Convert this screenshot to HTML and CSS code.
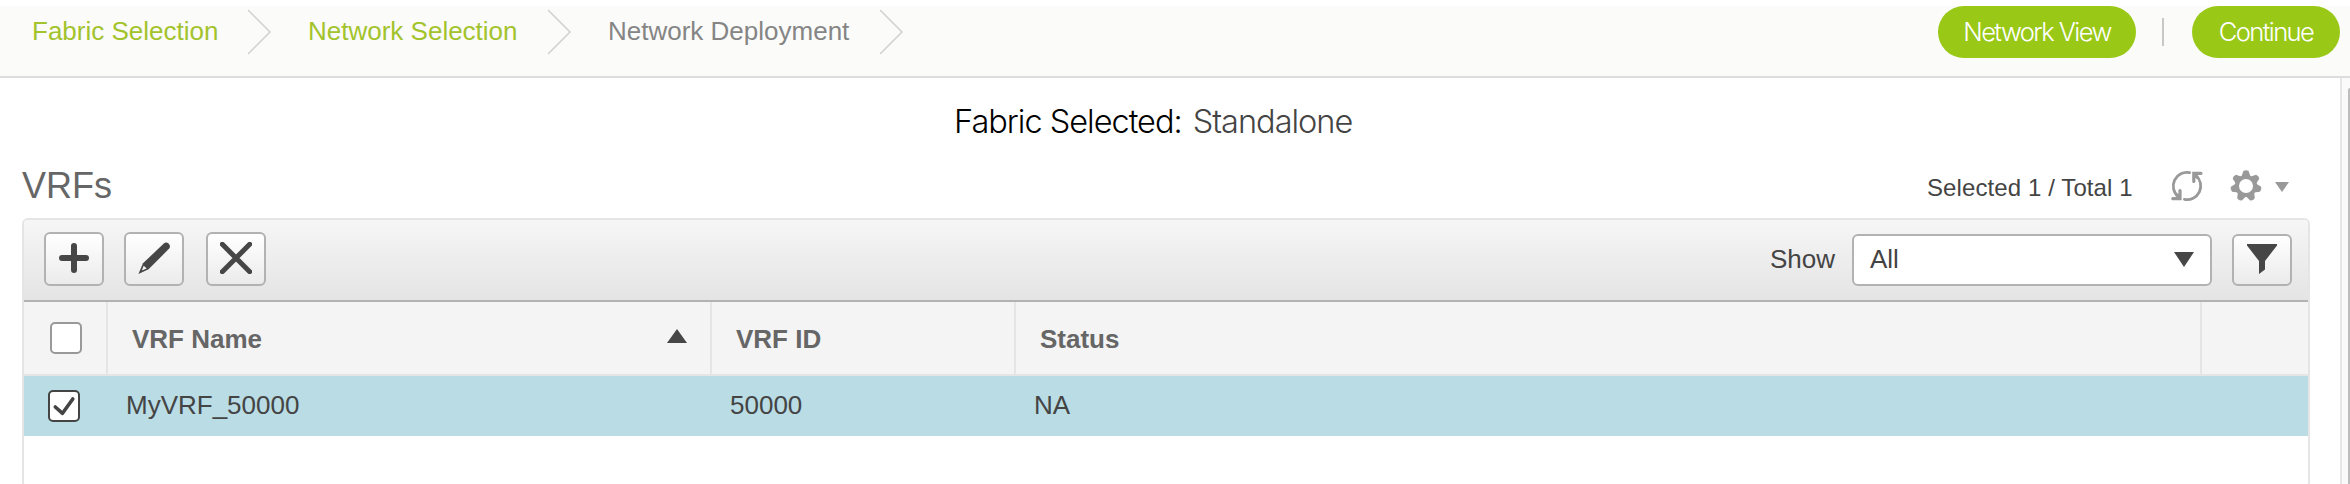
FILE: index.html
```html
<!DOCTYPE html>
<html lang="en">
<head>
<meta charset="utf-8">
<title>VRFs</title>
<link rel="stylesheet" href="styles.css">
</head>
<body>
<header class="topbar">
  <nav class="steps">
    <span class="step step-fabric">Fabric Selection</span>
    <svg class="chevron" viewBox="0 0 24 46"><path d="M0 1L22 23L0 45"/></svg>
    <span class="step step-network">Network Selection</span>
    <svg class="chevron" viewBox="0 0 24 46"><path d="M0 1L22 23L0 45"/></svg>
    <span class="step step-current">Network Deployment</span>
    <svg class="chevron" viewBox="0 0 24 46"><path d="M0 1L22 23L0 45"/></svg>
  </nav>
  <div class="actions">
    <button class="pill pill-view">Network View</button>
    <span class="divider"></span>
    <button class="pill pill-continue">Continue</button>
  </div>
</header>
<div class="body">
  <main class="content">
    <div class="fabric"><span class="fabric-label">Fabric Selected:</span><span class="fabric-value">Standalone</span></div>
    <div class="titlebar">
      <h1 class="title">VRFs</h1>
      <span class="count">Selected 1 / Total 1</span>
      <svg class="refresh" viewBox="0 0 32 32">
        <path d="M18.6 2.7A13.6 13.6 0 0 0 7.2 26.5M13.4 29.3A13.6 13.6 0 0 0 24.8 5.5"/>
        <path class="arrowheads" d="M30 3.3H22.8V11.5M1.8 28.7H9V20.5M23 4L26 7M8.8 28L5.8 25"/>
      </svg>
      <svg class="gear" viewBox="-16 -16 32 32">
        <path id="tooth" d="M-4.6 -9.2L-2.6 -14.9Q0 -16.6 2.6 -14.9L4.6 -9.2Z"/>
        <use href="#tooth" transform="rotate(51.43)"/>
        <use href="#tooth" transform="rotate(102.86)"/>
        <use href="#tooth" transform="rotate(154.29)"/>
        <use href="#tooth" transform="rotate(205.71)"/>
        <use href="#tooth" transform="rotate(257.14)"/>
        <use href="#tooth" transform="rotate(308.57)"/>
        <circle class="gear-ring" r="9"/>
      </svg>
      <svg class="gear-caret" viewBox="0 0 14 10"><path d="M0 0H14L7 10Z"/></svg>
    </div>
    <section class="panel">
      <div class="toolbar">
        <button class="tool tool-add" aria-label="Add"><svg viewBox="0 0 32 32"><path class="stroke" d="M16 4V28M4 16H28"/></svg></button>
        <button class="tool tool-edit" aria-label="Edit"><svg viewBox="0 0 32 32"><path d="M5 21.3L25.8 1.5Q28 -.4 30.6 1.5Q33 4 31.2 6.6L10.6 27.2L.4 32Z"/><path class="nib" d="M3.8 28.4L5.7 23.8L7.1 25.1L8.6 26.6Z"/></svg></button>
        <button class="tool tool-delete" aria-label="Delete"><svg viewBox="0 0 32 32"><path class="stroke cross" d="M2.3 2.3L29.7 29.7M29.7 2.3L2.3 29.7"/></svg></button>
        <label class="show">Show</label>
        <div class="select"><span>All</span><svg class="select-caret" viewBox="0 0 20 15"><path d="M0 0H20L10 15Z"/></svg></div>
        <button class="tool tool-filter" aria-label="Filter"><svg viewBox="0 0 30 30"><path d="M0 0H30V1.5L18 17V25.5L12 30V17L0 1.5Z"/></svg></button>
      </div>
      <div class="grid grid-head">
        <div class="cell cell-check"><span class="checkbox"></span></div>
        <div class="cell">VRF Name<svg class="sort" viewBox="0 0 20 14"><path d="M0 14L10 0L20 14Z"/></svg></div>
        <div class="cell">VRF ID</div>
        <div class="cell">Status</div>
        <div class="cell cell-last"></div>
      </div>
      <div class="grid grid-row">
        <div class="cell cell-check"><span class="checkbox checked"><svg viewBox="0 0 28 28"><path d="M5.3 15L12.5 21.3L22.8 7"/></svg></span></div>
        <div class="cell">MyVRF_50000</div>
        <div class="cell">50000</div>
        <div class="cell">NA</div>
        <div class="cell"></div>
      </div>
    </section>
  </main>
  <aside class="scrollbar"><div class="thumb"></div></aside>
</div>
</body>
</html>
```
FILE: styles.css
```css
* { box-sizing: border-box; }
body {
  margin: 0;
  padding-top: 6px;
  width: 2350px;
  height: 484px;
  overflow: hidden;
  display: flex;
  flex-direction: column;
  background: #fff;
  color: #444;
  font: 26px/30px "Liberation Sans", Arial, sans-serif;
}
svg { display: block; flex: none; }
button { font: inherit; padding: 0; margin: 0; }

.topbar {
  flex: none;
  height: 72px;
  display: flex;
  justify-content: space-between;
  background: #fbfbf9;
  border-bottom: 2px solid #dcdddc;
}
.steps { display: flex; align-items: flex-start; padding-left: 32px; }
.step { color: #a3c32c; line-height: 50px; white-space: nowrap; }
.step-fabric { width: 216px; }
.step-network { width: 240px; }
.step-current { width: 272px; color: #858585; }
.chevron { width: 24px; height: 46px; margin: 3px 36px 0 0; fill: none; stroke: #d0d0ce; stroke-width: 1.5; }

.actions { display: flex; align-items: flex-start; padding-right: 10px; }
.pill {
  height: 52px;
  border: 0;
  border-radius: 26px;
  background: #99c817;
  color: #fff;
  font: 300 25.6px/52px Inter, "Liberation Sans", sans-serif;
  letter-spacing: -1.6px;
  white-space: nowrap;
}
.pill-view { width: 198px; }
.pill-continue { width: 148px; }
.divider { width: 2px; height: 28px; margin: 12px 28px 0 26px; background: #c8c8c8; }

.body { flex: 1; display: flex; min-height: 0; }
.content { width: 2340px; padding-right: 30px; padding-left: 22px; overflow: hidden; }
.scrollbar { width: 10px; padding: 10px 0 0 6px; background: #fafafa; border-left: 2px solid #e6e6e6; }
.thumb { height: 420px; border-radius: 6px 0 0 0; background: #bdbdbd; }

.fabric {
  display: flex;
  gap: 11px;
  height: 86px;
  padding-left: 932px;
  font: 300 32.5px/87px Inter, "Liberation Sans", sans-serif;
  letter-spacing: -1px;
  white-space: nowrap;
}
.fabric-label { color: #000; }

.titlebar { display: flex; height: 54px; }
.title { margin: 0; flex: 1; color: #666; font-size: 36px; font-weight: 400; line-height: 43px; }
.count { width: 244px; font-size: 24px; line-height: 47px; letter-spacing: 0.1px; white-space: nowrap; }
.refresh { width: 32px; height: 32px; margin: 6px 27px 0 0; fill: none; stroke: #999; stroke-width: 2.8; stroke-linecap: round; }
.arrowheads { stroke-width: 3.2; }
.gear { width: 32px; height: 32px; margin: 6px 13px 0 0; fill: #999; overflow: visible; }
.gear-ring { fill: none; stroke: #999; stroke-width: 4; }
.gear-caret { width: 14px; height: 10px; margin: 18px 21px 0 0; fill: #999; }

.panel { height: 270px; border: 2px solid #e5e5e5; border-radius: 6px; overflow: hidden; }
.toolbar {
  display: flex;
  align-items: flex-start;
  height: 82px;
  padding: 12px 16px 0 20px;
  background: linear-gradient(#f6f6f6, #e4e4e4);
  border-bottom: 2px solid #b2b2b2;
}
.tool {
  display: flex;
  align-items: center;
  justify-content: center;
  width: 60px;
  height: 54px;
  border: 2px solid #b2b2b2;
  border-radius: 6px;
  background: linear-gradient(#fff, #ebebeb);
  fill: #464646;
}
.tool svg { width: 32px; height: 32px; margin-top: -2px; }
.tool-add { margin-right: 20px; }
.tool-edit { margin-right: 22px; }
.tool-delete { margin-right: auto; }
.stroke { fill: none; stroke: #464646; stroke-width: 6; stroke-linecap: round; }
.cross { stroke-width: 5; }
.nib { fill: #f4f4f4; }
.show { width: 82px; line-height: 54px; }
.select {
  display: flex;
  justify-content: space-between;
  width: 360px;
  height: 52px;
  margin: 2px 20px 0 0;
  padding: 0 16px;
  border: 2px solid #b2b2b2;
  border-radius: 6px;
  background: #fff;
  line-height: 46px;
}
.select-caret { width: 20px; height: 15px; margin-top: 16px; fill: #464646; }
.tool-filter { height: 52px; margin-top: 2px; }
.tool-filter svg { width: 30px; height: 30px; }

.grid { display: grid; grid-template-columns: 84px 604px 304px 1186px 106px; }
.grid-head { height: 74px; background: #f4f4f4; border-bottom: 2px solid #e5e5e5; color: #666; font-weight: 700; line-height: 74px; }
.grid-head .cell { display: flex; justify-content: space-between; padding: 0 23px 0 24px; border-right: 2px solid #e5e5e5; }
.grid-head .cell-last { border-right: 0; }
.sort { width: 20px; height: 14px; margin-top: 27px; fill: #464646; }
.grid-row { height: 60px; background: #b9dce5; line-height: 58px; }
.grid-row .cell { padding-left: 18px; }
.grid-head .cell-check { padding: 20px 0 0 26px; }
.grid-row .cell-check { padding: 14px 0 0 24px; }
.checkbox { display: block; width: 32px; height: 32px; border: 2px solid #999; border-radius: 5px; background: #fff; }
.checked { border-color: #444; }
.checked svg { width: 28px; height: 28px; fill: none; stroke: #444; stroke-width: 3.6; stroke-linecap: round; stroke-linejoin: round; }
```
